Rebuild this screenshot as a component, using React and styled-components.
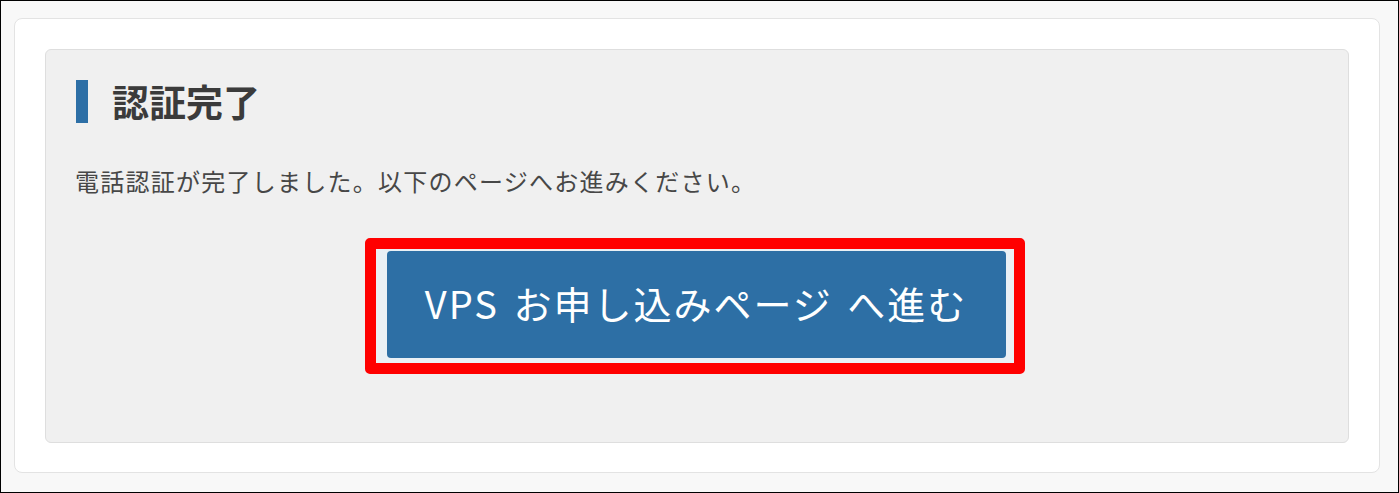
import React from "react";
import styled, { createGlobalStyle } from "styled-components";

const Global = createGlobalStyle`
  html, body { margin: 0; padding: 0; background: #f7f7f7; }
  * { box-sizing: border-box; }
`;

const Frame = styled.div`
  width: 1399px;
  height: 493px;
  border: 1px solid #000;
  background: #f8f8f8;
  padding: 17px 18px 0 13px;
  font-family: "Noto Sans CJK JP", "Noto Sans", sans-serif;
`;

const Card = styled.div`
  width: 1366px;
  height: 455px;
  background: #fff;
  border: 1px solid #e3e3e3;
  border-radius: 8px;
  padding: 30px;
`;

const Panel = styled.section`
  height: 394px;
  background: #f0f0f0;
  border: 1px solid #dedede;
  border-radius: 6px;
  padding: 30px 30px 0 29px;
  display: flex;
  flex-direction: column;
`;

const Heading = styled.h2`
  margin: 0;
  display: flex;
  align-items: center;
  gap: 24px;
  height: 43px;
  font-size: 37px;
  font-weight: 700;
  color: #3b3b3b;
  line-height: 1;
  padding-left: 1px;
`;

const Bar = styled.span`
  width: 12px;
  height: 43px;
  background: #2d6fa6;
  flex: none;
`;

const Message = styled.p`
  margin: 44px 0 0 0;
  font-size: 24px;
  line-height: 28px;
  color: #474747;
  font-weight: 400;
  letter-spacing: 1.25px;
`;

const Highlight = styled.div`
  align-self: center;
  margin-top: 43px;
  width: 660px;
  height: 136px;
  border: 11px solid #ff0000;
  border-radius: 5px;
  background: #eaf0f5;
  padding: 2px 8px 5px 11px;
  display: flex;
  margin-left: -4px;
`;

const Button = styled.button`
  flex: 1;
  border: none;
  border-radius: 4px;
  background: #2d6fa5;
  color: #fff;
  font-family: "Noto Sans CJK JP", "Noto Sans", sans-serif;
  font-size: 38px;
  font-weight: 400;
  letter-spacing: 2px;
  word-spacing: 4px;
  cursor: pointer;
  padding: 0 0 4px 0;
`;

export default function App() {
  return (
    <>
      <Global />
      <Frame>
        <Card>
          <Panel>
            <Heading>
              <Bar />
              認証完了
            </Heading>
            <Message>電話認証が完了しました。以下のページへお進みください。</Message>
            <Highlight>
              <Button>VPS お申し込みページ へ進む</Button>
            </Highlight>
          </Panel>
        </Card>
      </Frame>
    </>
  );
}
